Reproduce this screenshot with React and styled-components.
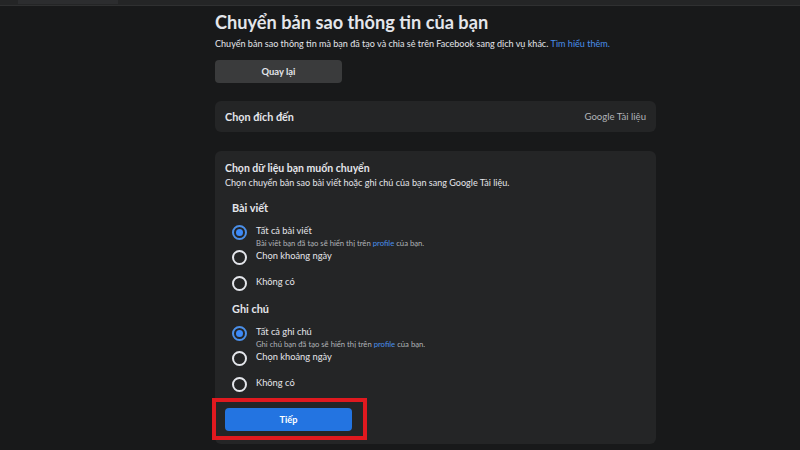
import React from "react";
import styled, { createGlobalStyle } from "styled-components";

const Global = createGlobalStyle`
  html, body { margin: 0; padding: 0; background: #18191a; }
  body { font-family: Lato, "Noto Sans", sans-serif; color: #e4e6eb; }
  * { box-sizing: border-box; }
`;

const Page = styled.div`
  width: 800px;
  height: 450px;
  overflow: hidden;
  background: #18191a;
  display: flex;
  flex-direction: column;
`;

const TopBar = styled.div`
  height: 6px;
  background: #242526;
  border-bottom: 1px solid #2f3031;
  display: flex;
  padding-left: 18px;
`;

const TopTab = styled.div`
  width: 100px;
  height: 4px;
  background: #2c2d2f;
`;

const Layout = styled.div`
  display: grid;
  grid-template-columns: 215px 441px 1fr;
  flex: 1;
`;

const Column = styled.main`
  grid-column: 2;
  display: flex;
  flex-direction: column;
  padding-top: 4px;
`;

const Title = styled.h1`
  margin: 0;
  font-size: 18.2px;
  font-weight: 700;
  line-height: 24px;
  color: #e4e6eb;
`;

const Lead = styled.p`
  margin: 3px 0 0;
  font-size: 9.05px;
  line-height: 14px;
  white-space: nowrap;
  color: #e4e6eb;
`;

const Link = styled.a`
  color: #4a8fea;
  text-decoration: none;
`;

const GreyButton = styled.button`
  margin-top: 9px;
  width: 127px;
  height: 23px;
  border: none;
  border-radius: 4px;
  background: #3a3b3c;
  color: #e4e6eb;
  font-family: inherit;
  font-size: 9.4px;
  font-weight: 700;
`;

const Card = styled.section`
  background: #242526;
  border-radius: 6px;
  margin-top: ${(p) => p.$mt}px;
  padding: ${(p) => p.$pad};
`;

const DestRow = styled.div`
  display: flex;
  justify-content: space-between;
  align-items: center;
  height: 31px;
  padding: 0 10px;
`;

const CardTitle = styled.div`
  font-size: ${(p) => p.$size || 10.8}px;
  font-weight: 700;
  line-height: 16px;
  color: #e4e6eb;
`;

const DestValue = styled.div`
  font-size: 9.6px;
  color: #b0b3b8;
`;

const CardLead = styled.div`
  font-size: 9.05px;
  line-height: 14px;
  color: #e4e6eb;
`;

const Group = styled.div`
  padding-left: 7px;
  margin-top: ${(p) => p.$mt}px;
`;

const GroupLabel = styled.div`
  font-size: 10.9px;
  font-weight: 700;
  line-height: 16px;
  color: #e4e6eb;
`;

const Options = styled.div`
  display: flex;
  flex-direction: column;
  margin-top: 8px;
`;

const Option = styled.label`
  display: flex;
  align-items: flex-start;
  gap: 9px;
  height: ${(p) => (p.$tall ? 25 : 26)}px;
`;

const Radio = styled.span`
  width: 15px;
  height: 15px;
  flex: none;
  border-radius: 50%;
  border: 2px solid ${(p) => (p.$on ? "#4b8fe8" : "#e4e6eb")};
  margin-top: 1px;
  display: flex;
  align-items: center;
  justify-content: center;
  &::after {
    content: "";
    width: 7px;
    height: 7px;
    border-radius: 50%;
    background: ${(p) => (p.$on ? "#3d8af7" : "transparent")};
  }
`;

const OptionText = styled.div`
  display: flex;
  flex-direction: column;
`;

const OptionLabel = styled.span`
  font-size: 9.3px;
  line-height: 14px;
  color: #e4e6eb;
`;

const OptionHint = styled.span`
  font-size: 7.7px;
  line-height: 11px;
  color: #b0b3b8;
`;

const Footer = styled.div`
  position: relative;
  margin-top: 6px;
  width: fit-content;
  &::before {
    content: "";
    position: absolute;
    left: -13px;
    top: -10px;
    right: -15px;
    bottom: -9px;
    border: 4px solid #e0191f;
    pointer-events: none;
  }
`;

const PrimaryButton = styled.button`
  display: block;
  width: 127px;
  height: 23px;
  border: none;
  border-radius: 4px;
  background: #2374e1;
  color: #fff;
  font-family: inherit;
  font-size: 9.2px;
  font-weight: 700;
`;

const RadioOption = ({ on, label, hint }) => (
  <Option $tall={!!hint}>
    <Radio $on={on} />
    <OptionText>
      <OptionLabel>{label}</OptionLabel>
      {hint && (
        <OptionHint>
          {hint[0]}
          <Link href="#">profile</Link>
          {hint[1]}
        </OptionHint>
      )}
    </OptionText>
  </Option>
);

export default function App() {
  return (
    <Page>
      <Global />
      <TopBar>
        <TopTab />
      </TopBar>
      <Layout>
        <Column>
          <Title>Chuyển bản sao thông tin của bạn</Title>
          <Lead>
            Chuyển bản sao thông tin mà bạn đã tạo và chia sẻ trên Facebook sang dịch vụ khác.{" "}
            <Link href="#">Tìm hiểu thêm.</Link>
          </Lead>
          <GreyButton>Quay lại</GreyButton>
          <Card $mt={18} $pad="0">
            <DestRow>
              <CardTitle>Chọn đích đến</CardTitle>
              <DestValue>Google Tài liệu</DestValue>
            </DestRow>
          </Card>
          <Card $mt={19} $pad="9px 10px 13px">
            <CardTitle $size={10.5}>Chọn dữ liệu bạn muốn chuyển</CardTitle>
            <CardLead>Chọn chuyển bản sao bài viết hoặc ghi chú của bạn sang Google Tài liệu.</CardLead>
            <Group $mt={10}>
              <GroupLabel>Bài viết</GroupLabel>
              <Options>
                <RadioOption
                  on
                  label="Tất cả bài viết"
                  hint={["Bài viết bạn đã tạo sẽ hiển thị trên ", " của bạn."]}
                />
                <RadioOption label="Chọn khoảng ngày" />
                <RadioOption label="Không có" />
              </Options>
            </Group>
            <Group $mt={0}>
              <GroupLabel>Ghi chú</GroupLabel>
              <Options>
                <RadioOption
                  on
                  label="Tất cả ghi chú"
                  hint={["Ghi chú bạn đã tạo sẽ hiển thị trên ", " của bạn."]}
                />
                <RadioOption label="Chọn khoảng ngày" />
                <RadioOption label="Không có" />
              </Options>
            </Group>
            <Footer>
              <PrimaryButton>Tiếp</PrimaryButton>
            </Footer>
          </Card>
        </Column>
      </Layout>
    </Page>
  );
}
